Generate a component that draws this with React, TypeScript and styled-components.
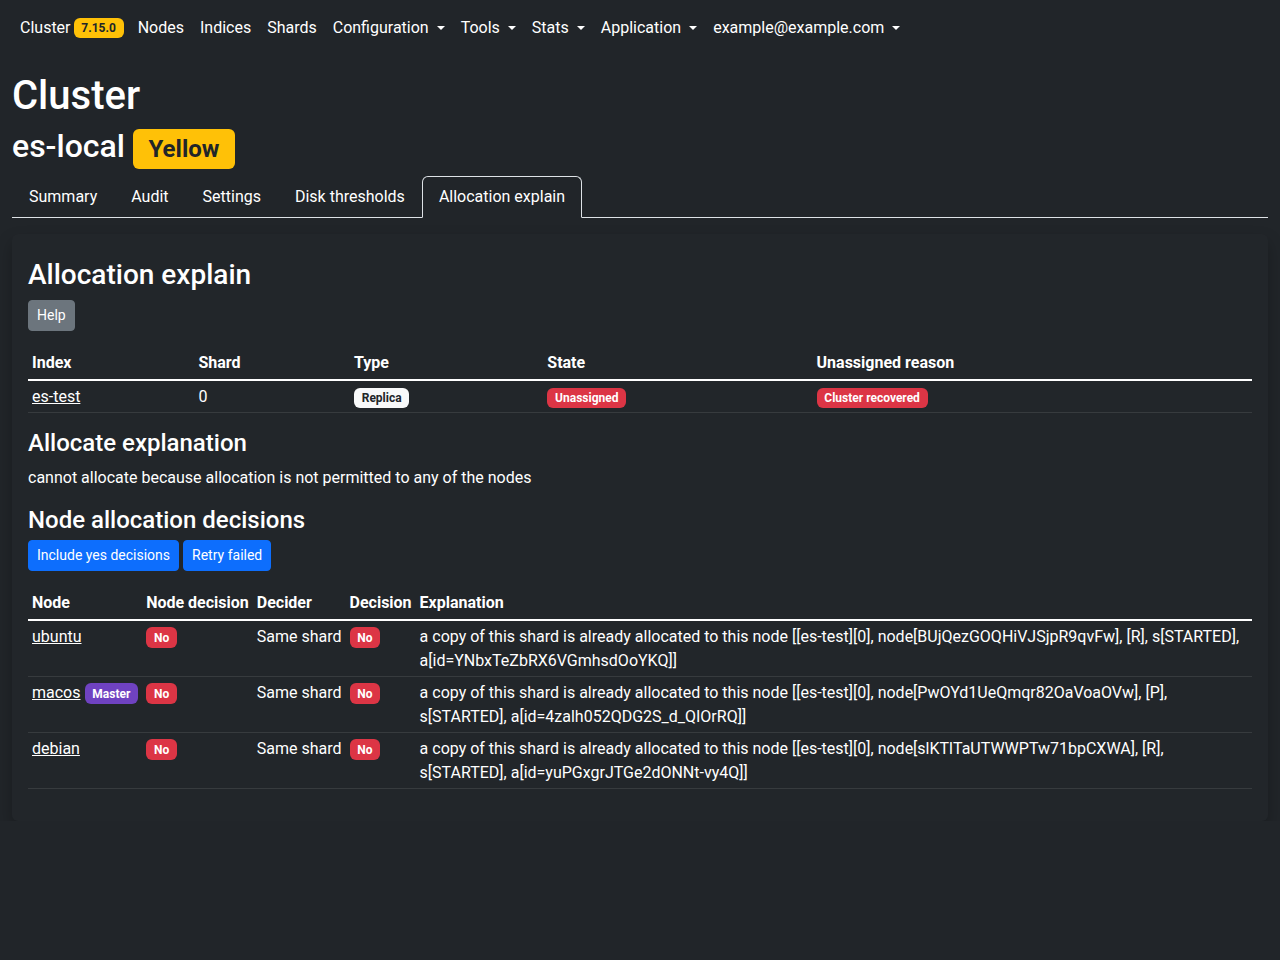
import styled, { createGlobalStyle } from 'styled-components';

const GlobalStyle = createGlobalStyle`
  * { box-sizing: border-box; }
  body {
    margin: 0;
    background: #212529;
    color: #dee2e6;
    font-family: Roboto, "Noto Sans", sans-serif;
    font-size: 16px;
    line-height: 1.5;
  }
`;

type Variant = 'warning' | 'light' | 'danger' | 'purple';

const badgeColors: Record<Variant, [string, string]> = {
  warning: ['#ffc107', '#212529'],
  light: ['#f8f9fa', '#212529'],
  danger: ['#dc3545', '#fff'],
  purple: ['#6f42c1', '#fff'],
};

const Badge = styled.span<{ $v: Variant }>`
  display: inline-block;
  padding: 0.35em 0.65em;
  font-size: 0.75em;
  font-weight: 700;
  line-height: 1;
  border-radius: 0.375rem;
  white-space: nowrap;
  vertical-align: baseline;
  background: ${(p) => badgeColors[p.$v][0]};
  color: ${(p) => badgeColors[p.$v][1]};
`;

const NavBar = styled.nav`
  display: flex;
  align-items: center;
  height: 56px;
  padding: 0 12px 0 20px;
`;

const Brand = styled.a`
  color: #fff;
  font-size: 16px;
  margin-right: 6px;
  display: flex;
  align-items: center;
  gap: 3px;
  text-decoration: none;
`;

const NavLink = styled.a`
  color: #fff;
  padding: 8px;
  text-decoration: none;
  display: flex;
  align-items: center;
`;

const Caret = styled.span`
  display: inline-block;
  margin-left: 0.5em;
  width: 0;
  height: 0;
  border-top: 0.3em solid #fff;
  border-left: 0.3em solid transparent;
  border-right: 0.3em solid transparent;
`;

const Container = styled.main`
  padding: 0 12px;
`;

const Title = styled.h1`
  margin: 16px 0 7px;
  font-size: 40px;
  font-weight: 500;
  line-height: 1.2;
  color: #fff;
`;

const ClusterName = styled.h2`
  margin: 0 0 7px;
  font-size: 32px;
  font-weight: 500;
  line-height: 1.2;
  color: #fff;
  display: flex;
  align-items: baseline;
  gap: 8px;
`;

const Tabs = styled.div`
  display: flex;
  border-bottom: 1px solid #dee2e6;
`;

const Tab = styled.a<{ $active?: boolean }>`
  padding: 8px 16px;
  margin-bottom: -1px;
  color: #fff;
  text-decoration: none;
  border: 1px solid ${(p) => (p.$active ? '#dee2e6' : 'transparent')};
  border-bottom-color: ${(p) => (p.$active ? '#212529' : 'transparent')};
  border-radius: 6px 6px 0 0;
  background: ${(p) => (p.$active ? '#212529' : 'transparent')};
`;

const Card = styled.section`
  margin-top: 16px;
  padding: 24px 16px 16px;
  background: #22262a;
  border-radius: 6px;
  box-shadow: 0 0.5rem 1rem rgba(0, 0, 0, 0.25);
`;

const H3 = styled.h3`
  margin: 0 0 8px;
  font-size: 28px;
  font-weight: 500;
  line-height: 1.2;
  color: #fff;
`;

const H4 = styled.h4<{ $tight?: boolean }>`
  margin: 0 0 ${(p) => (p.$tight ? '5px' : '8px')};
  font-size: 24px;
  font-weight: 500;
  line-height: 1.2;
  color: #fff;
`;

const Text = styled.p`
  margin: 0 0 16px;
  color: #fff;
`;

const ButtonRow = styled.div`
  display: flex;
  gap: 4px;
  margin-bottom: 16px;
`;

const Button = styled.button<{ $v: 'secondary' | 'primary' }>`
  font-family: inherit;
  font-size: 14px;
  line-height: 1.5;
  padding: 4px 8px;
  border: 1px solid ${(p) => (p.$v === 'primary' ? '#0d6efd' : '#6c757d')};
  border-radius: 4px;
  background: ${(p) => (p.$v === 'primary' ? '#0d6efd' : '#6c757d')};
  color: #fff;
`;

const Table = styled.table`
  width: 100%;
  border-collapse: collapse;
  margin-bottom: 16px;
  color: #fff;

  th {
    text-align: left;
    font-weight: 700;
    padding: 4px;
    border-bottom: 2px solid #fff;
    white-space: nowrap;
  }

  td {
    padding: 4px 4px 3px;
    vertical-align: top;
    border-bottom: 1px solid #373b3e;
  }
`;

const Link = styled.a`
  color: #fff;
  text-decoration: underline;
`;

const NodeCell = styled.td`
  white-space: nowrap;
  ${Badge} {
    margin-left: 4px;
  }
`;

const NoWrapCell = styled.td`
  white-space: nowrap;
`;

const nodes = [
  {
    name: 'ubuntu',
    master: false,
    explanation:
      'a copy of this shard is already allocated to this node [[es-test][0], node[BUjQezGOQHiVJSjpR9qvFw], [R], s[STARTED], a[id=YNbxTeZbRX6VGmhsdOoYKQ]]',
  },
  {
    name: 'macos',
    master: true,
    explanation:
      'a copy of this shard is already allocated to this node [[es-test][0], node[PwOYd1UeQmqr82OaVoaOVw], [P], s[STARTED], a[id=4zalh052QDG2S_d_QIOrRQ]]',
  },
  {
    name: 'debian',
    master: false,
    explanation:
      'a copy of this shard is already allocated to this node [[es-test][0], node[slKTlTaUTWWPTw71bpCXWA], [R], s[STARTED], a[id=yuPGxgrJTGe2dONNt-vy4Q]]',
  },
];

const menus = ['Configuration', 'Tools', 'Stats', 'Application', 'example@example.com'];

export default function App() {
  return (
    <>
      <GlobalStyle />
      <NavBar>
        <Brand href="#">
          Cluster <Badge $v="warning">7.15.0</Badge>
        </Brand>
        <NavLink href="#">Nodes</NavLink>
        <NavLink href="#">Indices</NavLink>
        <NavLink href="#">Shards</NavLink>
        {menus.map((m) => (
          <NavLink href="#" key={m}>
            {m}
            <Caret />
          </NavLink>
        ))}
      </NavBar>
      <Container>
        <Title>Cluster</Title>
        <ClusterName>
          es-local <Badge $v="warning">Yellow</Badge>
        </ClusterName>
        <Tabs>
          <Tab href="#">Summary</Tab>
          <Tab href="#">Audit</Tab>
          <Tab href="#">Settings</Tab>
          <Tab href="#">Disk thresholds</Tab>
          <Tab href="#" $active>
            Allocation explain
          </Tab>
        </Tabs>
        <Card>
          <H3>Allocation explain</H3>
          <ButtonRow>
            <Button $v="secondary">Help</Button>
          </ButtonRow>
          <Table>
            <thead>
              <tr>
                <th style={{ width: '13.6%' }}>Index</th>
                <th style={{ width: '12.7%' }}>Shard</th>
                <th style={{ width: '15.8%' }}>Type</th>
                <th style={{ width: '22%' }}>State</th>
                <th>Unassigned reason</th>
              </tr>
            </thead>
            <tbody>
              <tr>
                <td>
                  <Link href="#">es-test</Link>
                </td>
                <td>0</td>
                <td>
                  <Badge $v="light">Replica</Badge>
                </td>
                <td>
                  <Badge $v="danger">Unassigned</Badge>
                </td>
                <td>
                  <Badge $v="danger">Cluster recovered</Badge>
                </td>
              </tr>
            </tbody>
          </Table>
          <H4>Allocate explanation</H4>
          <Text>cannot allocate because allocation is not permitted to any of the nodes</Text>
          <H4 $tight>Node allocation decisions</H4>
          <ButtonRow>
            <Button $v="primary">Include yes decisions</Button>
            <Button $v="primary">Retry failed</Button>
          </ButtonRow>
          <Table>
            <thead>
              <tr>
                <th>Node</th>
                <th>Node decision</th>
                <th>Decider</th>
                <th>Decision</th>
                <th>Explanation</th>
              </tr>
            </thead>
            <tbody>
              {nodes.map((n) => (
                <tr key={n.name}>
                  <NodeCell>
                    <Link href="#">{n.name}</Link>
                    {n.master && <Badge $v="purple">Master</Badge>}
                  </NodeCell>
                  <td>
                    <Badge $v="danger">No</Badge>
                  </td>
                  <NoWrapCell>Same shard</NoWrapCell>
                  <td>
                    <Badge $v="danger">No</Badge>
                  </td>
                  <td>{n.explanation}</td>
                </tr>
              ))}
            </tbody>
          </Table>
        </Card>
      </Container>
    </>
  );
}
